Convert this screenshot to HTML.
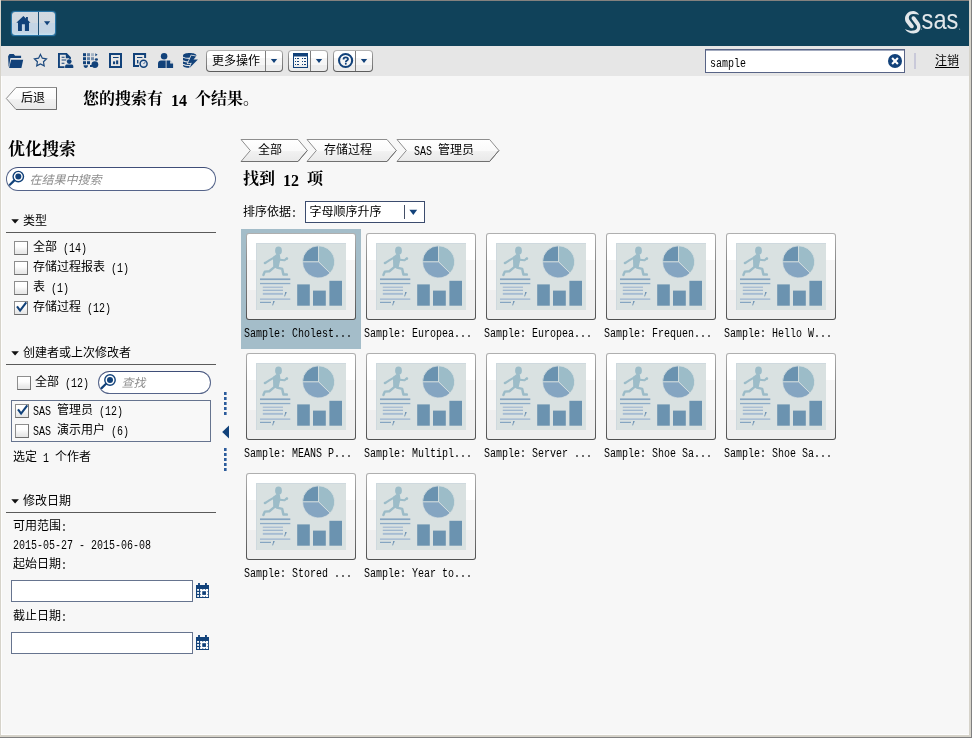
<!DOCTYPE html>
<html lang="zh-CN"><head><meta charset="utf-8"><title>SAS</title>
<style>
html,body{margin:0;padding:0;background:#f7f7f7}
#r{position:relative;will-change:transform;width:972px;height:738px;overflow:hidden;background:#f7f7f7;font-family:"Liberation Sans",sans-serif;font-size:12px;color:#000}
.a{position:absolute;display:block}
svg{display:block;overflow:visible}
.t{position:absolute;white-space:nowrap;color:#000}
.t.i>.c{transform:skewX(-14deg);transform-origin:0 100%}
.c{position:absolute;top:0;height:12px;line-height:12px;font-size:12px;overflow:visible;color:inherit;white-space:pre;font-family:"Liberation Sans","Noto Sans CJK SC",sans-serif}
.l{position:absolute;top:2px;font:12px/12px "Liberation Mono",monospace;white-space:pre;transform:scaleX(.83333);transform-origin:0 0}
.lb{position:absolute;top:2px;font-family:"Liberation Serif",serif;font-weight:bold;white-space:pre}
.t u{position:absolute;left:0;height:1px;background:currentColor}
.btn{border-radius:4px;background:linear-gradient(#b6b6b6 0,#8e8e8e 30%,#7c7c7c 70%,#5a5a5a 100%)}
.btn:before{content:"";position:absolute;left:1px;top:1px;right:1px;bottom:1px;border-radius:3px;background:linear-gradient(#fff 0,#fff 33%,#f6f6f6 33%,#f6f6f6 68%,#ececec 68%,#ececec 100%)}
.cb{box-sizing:border-box;border:1px solid #8e8e8e;border-right-color:#777;border-bottom-color:#6e6e6e;background:linear-gradient(#fff 0,#fdfdfd 40%,#ececec 75%,#e6e6e6 100%)}
.card{border-radius:3px;background:linear-gradient(#b0b0b0 0,#8c8c8c 30%,#6e6e6e 75%,#505050 100%)}
.card:before{content:"";position:absolute;left:1px;top:1px;right:1px;bottom:1px;border-radius:2px;background:linear-gradient(#fff 0,#fff 30.6%,#f6f6f6 30.6%,#f6f6f6 65.9%,#efefef 65.9%,#efefef 100%)}
.card>svg{position:absolute;left:10px;top:10px}
</style></head>
<body>
<div id="r">
<div class="a " style="left:1px;top:1px;width:968px;height:45px;background:#10425a"></div>
<div class="a " style="left:1px;top:46px;width:968px;height:30px;background:#e6e6e6"></div>
<div class="a " style="left:1px;top:0px;width:968px;height:1px;background:#84817e"></div>
<div class="a " style="left:0px;top:0px;width:1px;height:738px;background:#d6d3ca"></div>
<div class="a " style="left:1px;top:76px;width:1px;height:658px;background:#fdfdfd"></div>
<div class="a " style="left:969px;top:0px;width:2px;height:738px;background:#d6d3ca"></div>
<div class="a " style="left:971px;top:0px;width:1px;height:738px;background:#808080"></div>
<div class="a " style="left:1px;top:734px;width:968px;height:1px;background:#fdfdfd"></div>
<div class="a " style="left:0px;top:735px;width:971px;height:2px;background:#d6d3ca"></div>
<div class="a " style="left:0px;top:737px;width:972px;height:1px;background:#808080"></div>
<div class="a " style="left:12px;top:12px;width:43px;height:23px;border-radius:3px;box-shadow:0 0 1.2px .6px #2f7eb3;background:linear-gradient(#d1d9e1 0,#d0d8e0 47%,#c4d4e4 47%,#c4d4e4 88%,#c6e2f2 100%)"></div>
<div class="a " style="left:38px;top:12px;width:1px;height:23px;background:#1d4f74"></div>
<svg class="a" style="left:12px;top:12px" width="43" height="23" viewBox="12 12 43 23" ><path fill="#12427a" d="M16.3 22.8L23.4 16L26 18.5V17.1H27.9V20.3L30.5 22.8H29V30.9H24.9V24.3H21.9V30.9H18V22.8Z"/><path fill="#12427a" d="M44 21.2H50.2L47.1 25.3Z"/></svg>
<svg class="a" style="left:900px;top:6px" width="66" height="34" viewBox="900 6 66 34" ><g fill="#e2e7ea"><path d="M919.2 14.7C917.5 12.3 915.5 11.1 913.2 11.1C908.5 11.1 905 14.6 905 18.7C905 20.4 905.6 21.9 906.7 23.3L910 27.5C910.8 28.5 912.4 28.6 913.2 27.8C914 27 914 25.8 913.3 24.9L909.9 20.5C909.2 19.6 908.8 18.7 908.8 17.7C908.8 15.6 910.7 14 913.2 14C915.5 14 917.5 14.3 919.2 14.7Z"/><path d="M904.9 28.9C907.5 30.3 910.5 30.8 913.2 30.6C915.6 30.4 917.1 29 917.1 27.3C917.1 26.4 916.8 25.6 916.2 24.9L912 19.5C911.3 18.6 911.4 17.4 912.2 16.7C913.1 16 914.4 16.2 915.1 17.1L919.3 22.7C920.1 23.9 920.5 25.4 920.5 27C920.5 30.7 917.5 33.5 913.5 33.5C909.8 33.5 906.8 31.7 904.9 28.9Z"/><circle cx="921.3" cy="29.2" r=".6" opacity=".6"/><circle cx="959.6" cy="29.2" r=".6" opacity=".6"/><text x="921.6" y="28.9" font-family="Liberation Sans, sans-serif" font-size="27.6" textLength="36.8" lengthAdjust="spacingAndGlyphs">sas</text></g></svg>
<svg class="a" style="left:4px;top:50px" width="200" height="22" viewBox="4 50 200 22" ><g fill="#12427a"><path d="M8.1 56.2L9.5 54H13.7L15.1 55.8H21.1V58H10.4L9.1 66.5L8.6 66.5Z"/><path d="M11.1 59.8H23.2L21.4 68H9.1Z"/><path d="M40.45 54.40L42.33 58.16L46.49 58.79L43.49 61.74L44.18 65.89L40.45 63.95L36.72 65.89L37.41 61.74L34.41 58.79L38.57 58.16Z" fill="none" stroke="#1d4a7f" stroke-width="1.2" stroke-linejoin="miter"/><path d="M58 53H66.8L70.9 57.2V59H69.2V58.2H65.8V54.8H59.9V66.2H64.5V68H58Z"/><path d="M61.6 56.8H64.6V57.8H61.6ZM61.6 59.4H66.3V60.4H61.6ZM61.6 62.8H64.4V63.8H61.6Z"/><circle cx="69.2" cy="61.6" r="2.4"/><path d="M65.1 68V66.4C65.1 65.2 66 64.6 67 64.6H71.4C72.5 64.6 73.3 65.2 73.3 66.4V68Z"/><rect x="83" y="53.2" width="3" height="3" opacity="1"/><rect x="87" y="53.2" width="3" height="3" opacity="0.62"/><rect x="91" y="53.2" width="3" height="3" opacity="0.3"/><rect x="83" y="57.2" width="3" height="3" opacity="1"/><rect x="87" y="57.2" width="3" height="3" opacity="0.62"/><rect x="91" y="57.2" width="3" height="3" opacity="0.55"/><rect x="83" y="61.2" width="3" height="3" opacity="1"/><rect x="87" y="61.2" width="3" height="3" opacity="1"/><path d="M95.3 53.2L97.6 54.7L95.3 56.2Z"/><path d="M83.6 65.2H88C88 67 87 68 85.8 68C84.6 68 83.6 67 83.6 65.2Z"/><rect x="90" y="65" width="2" height="2"/><circle cx="94.9" cy="64.6" r="3.4"/><ellipse cx="96.4" cy="59.5" rx="1.6" ry="1.2"/><path fill-rule="evenodd" d="M109 53H122V68H109ZM111 55V66H120V55Z"/><rect x="113" y="57" width="5.6" height="1"/><rect x="113" y="61.4" width="2.1" height="2.8"/><rect x="116.1" y="60.4" width="2.1" height="3.8"/><path d="M133 53H146.1V58H144.1V55H135V65H139V67H133Z"/><rect x="137" y="57" width="5.4" height="1"/><rect x="137" y="60" width="1.4" height="3.4"/><circle cx="143.6" cy="63.7" r="4.6" fill="#e6e6e6"/><circle cx="143.6" cy="63.7" r="3.5" fill="#dfe3ea" stroke="#12427a" stroke-width="1.5"/><path d="M143.6 63.9L145.2 62.2" stroke="#12427a" stroke-width=".9" fill="none"/><circle cx="164.1" cy="56.3" r="3.25"/><path d="M158 68V63.6C158 61.6 159.3 60.5 161 60.5H165.7V68Z"/><path d="M166.5 60.5H170L173.1 63.7V68H166.5Z"/><path d="M170.2 60.7V63.5H173Z" fill="#e6e6e6"/><path d="M183 55.5C183 53.9 186 53 189.7 53C193.4 53 196.4 53.9 196.4 55.5V65.6C196.4 67.1 193.4 68 189.7 68C186 68 183 67.1 183 65.6Z"/><path d="M183 57.1C185.4 58.8 194 58.8 196.4 57.1M183 60.7C185.4 62.4 194 62.4 196.4 60.7M183 64.2C185.4 65.9 194 65.9 196.4 64.2" stroke="#e6e6e6" stroke-width="1.1" fill="none"/><path d="M195.6 57L199.6 56.6V69H189.4L189.8 67.6L197.6 59.9L193.8 59.6Z" fill="#e6e6e6"/><path d="M191.3 55.6L196.1 56.5L193.5 59.4L197.9 59.6L189.8 67.7L191.7 62.8L187.9 63.2Z" stroke="#e6e6e6" stroke-width="1.5" paint-order="stroke"/></g></svg>
<div class="a btn" style="left:206px;top:50px;width:77px;height:22px;"></div>
<div class="a " style="left:265px;top:51px;width:1px;height:20px;background:#7e7e7e"></div>
<svg class="a" style="left:266px;top:55px" width="16" height="12" viewBox="266 55 16 12" ><path fill="#12427a" d="M270.85 59H277.15 L274 62.9Z"/></svg>
<div class="t" style="left:212px;top:55px;width:48px;height:12px"><span class="c" style="left:0px;width:48px">更多操作</span></div>
<div class="a btn" style="left:288px;top:50px;width:40px;height:22px;"></div>
<div class="a " style="left:310px;top:51px;width:1px;height:20px;background:#7e7e7e"></div>
<svg class="a" style="left:311px;top:55px" width="16" height="12" viewBox="311 55 16 12" ><path fill="#12427a" d="M315.85 59H322.15 L319 62.9Z"/></svg>
<svg class="a" style="left:292px;top:52px" width="18" height="18" viewBox="292 52 18 18" ><g fill="#12427a"><path fill-rule="evenodd" d="M293 53H308V68H293ZM294 56.4V67H307V56.4Z"/><rect x="295" y="58" width="1" height="1"/><rect x="297" y="58" width="2" height="1"/><rect x="302" y="58" width="1" height="1"/><rect x="304" y="58" width="2" height="1"/><rect x="295" y="61" width="1" height="1"/><rect x="297" y="61" width="2" height="1"/><rect x="302" y="61" width="1" height="1"/><rect x="304" y="61" width="2" height="1"/><rect x="295" y="64" width="1" height="1"/><rect x="297" y="64" width="2" height="1"/><rect x="302" y="64" width="1" height="1"/><rect x="304" y="64" width="2" height="1"/></g></svg>
<div class="a btn" style="left:333px;top:50px;width:40px;height:22px;"></div>
<div class="a " style="left:355px;top:51px;width:1px;height:20px;background:#7e7e7e"></div>
<svg class="a" style="left:356px;top:55px" width="16" height="12" viewBox="356 55 16 12" ><path fill="#12427a" d="M360.85 59H367.15 L364 62.9Z"/></svg>
<svg class="a" style="left:336px;top:52px" width="18" height="18" viewBox="336 52 18 18" ><circle cx="345.6" cy="60.5" r="6.55" fill="none" stroke="#12427a" stroke-width="2.1"/><path d="M343.5 59.4C343.5 58.1 344.4 57.45 345.7 57.45C347.1 57.45 348 58.2 348 59.2C348 60.6 345.8 60.6 345.8 62.2" fill="none" stroke="#12427a" stroke-width="1.75"/><circle cx="345.8" cy="63.8" r=".95" fill="#12427a"/></svg>
<div class="a " style="left:705px;top:49px;width:200px;height:24px;background:#fff;border:1px solid #586486;box-sizing:border-box;box-shadow:inset 0 1px 0 #a3abbf"></div>
<div class="t" style="left:710px;top:56px;width:36px;height:12px"><span class="l" style="left:0px">sample</span></div>
<svg class="a" style="left:887px;top:53px" width="16" height="16" viewBox="887 53 16 16" ><circle cx="895" cy="61" r="7" fill="#12427a"/><path d="M892.1 58.1L897.9 63.9M897.9 58.1L892.1 63.9" stroke="#fff" stroke-width="2.1" stroke-linecap="butt"/></svg>
<div class="a " style="left:914px;top:53px;width:2px;height:16px;background:#c9c9d9"></div>
<div class="t" style="left:935px;top:55px;width:24px;height:12px"><span class="c" style="left:0px;width:24px">注销</span><u style="width:24px;top:12px"></u></div>
<svg class="a" style="left:4px;top:86px" width="56" height="26" viewBox="4 86 56 26" ><defs><linearGradient id="gb" x1="0" y1="0" x2="0" y2="1"><stop offset="0" stop-color="#fff"/><stop offset=".5" stop-color="#fafafa"/><stop offset=".55" stop-color="#f1f1f1"/><stop offset="1" stop-color="#e9e9e9"/></linearGradient></defs><path d="M6.3 98.5L16 87.5H56.5V109.5H16Z" fill="url(#gb)" stroke="#8c8c8c" stroke-width="1" stroke-linejoin="round"/><path d="M16 109.5H56.5V87.5" fill="none" stroke="#6e6e6e" stroke-width="1"/></svg>
<div class="t" style="left:21px;top:92px;width:24px;height:12px"><span class="c" style="left:0px;width:24px">后退</span></div>
<div class="t" style="left:83px;top:91px;width:176px;height:16px"><span class="c" style="left:0px;width:80px;height:16px;font:bold 16px/16px 'Liberation Serif','Noto Serif CJK SC',serif">您的搜索有</span><span class="c" style="left:80px;width:4px"> </span><span class="lb" style="left:88px;font-size:16px;line-height:16px">14</span><span class="c" style="left:112px;width:64px;height:16px;font:bold 16px/16px 'Liberation Serif','Noto Serif CJK SC',serif">个结果。</span></div>
<div class="t" style="left:8px;top:141px;width:68px;height:17px"><span class="c" style="left:0px;width:68px;height:17px;font:bold 17px/17px 'Liberation Serif','Noto Serif CJK SC',serif">优化搜索</span></div>
<div class="a " style="left:6px;top:167px;width:210px;height:24px;background:#fff;border:1px solid #55648a;border-top-color:#3f4e78;box-sizing:border-box;border-radius:12px"></div>
<svg class="a" style="left:7px;top:168px" width="20" height="22" viewBox="7 168 20 22" ><circle cx="18.3" cy="176.6" r="5.2" fill="#fff" stroke="#12427a" stroke-width="1.4"/><circle cx="18.3" cy="176.6" r="3" fill="#12427a"/><path d="M14.1 180.6L9.9 184.7" stroke="#12427a" stroke-width="2.2" stroke-linecap="round"/></svg>
<div class="t i" style="left:28.5px;top:174px;width:72px;height:12px;color:#8f8f8f"><span class="c" style="left:0px;width:72px">在结果中搜索</span></div>
<svg class="a" style="left:10px;top:215px" width="10" height="12" viewBox="10 215 10 12" ><path d="M11.3 219.3H18.9L15.1 223.6Z" fill="#111"/></svg>
<div class="t" style="left:23px;top:215px;width:24px;height:12px"><span class="c" style="left:0px;width:24px">类型</span></div>
<div class="a " style="left:5.5px;top:232px;width:210.5px;height:1px;background:#5a5a5a"></div>
<div class="a cb" style="left:14px;top:241px;width:14px;height:14px;"></div>
<div class="t" style="left:33px;top:241px;width:54px;height:12px"><span class="c" style="left:0px;width:24px">全部</span><span class="l" style="left:24px"> (14)</span></div>
<div class="a cb" style="left:14px;top:261px;width:14px;height:14px;"></div>
<div class="t" style="left:33px;top:261px;width:96px;height:12px"><span class="c" style="left:0px;width:72px">存储过程报表</span><span class="l" style="left:72px"> (1)</span></div>
<div class="a cb" style="left:14px;top:281px;width:14px;height:14px;"></div>
<div class="t" style="left:33px;top:281px;width:36px;height:12px"><span class="c" style="left:0px;width:12px">表</span><span class="l" style="left:12px"> (1)</span></div>
<div class="a cb" style="left:14px;top:301px;width:14px;height:14px;"></div>
<svg class="a" style="left:14px;top:300px" width="15" height="15" viewBox="14 300 15 15" ><path d="M17 306.4L20.1 310.6L26.3 302.4" fill="none" stroke="#12427a" stroke-width="2.1" stroke-linejoin="miter"/></svg>
<div class="t" style="left:33px;top:301px;width:78px;height:12px"><span class="c" style="left:0px;width:48px">存储过程</span><span class="l" style="left:48px"> (12)</span></div>
<svg class="a" style="left:10px;top:347px" width="10" height="12" viewBox="10 347 10 12" ><path d="M11.3 351.3H18.9L15.1 355.6Z" fill="#111"/></svg>
<div class="t" style="left:23px;top:347px;width:108px;height:12px"><span class="c" style="left:0px;width:108px">创建者或上次修改者</span></div>
<div class="a " style="left:5.5px;top:364px;width:210.5px;height:1px;background:#5a5a5a"></div>
<div class="a cb" style="left:17px;top:375.5px;width:14px;height:14px;"></div>
<div class="t" style="left:35px;top:376px;width:54px;height:12px"><span class="c" style="left:0px;width:24px">全部</span><span class="l" style="left:24px"> (12)</span></div>
<div class="a " style="left:98px;top:371px;width:113px;height:23px;background:#fff;border:1px solid #55648a;border-top-color:#3f4e78;box-sizing:border-box;border-radius:11.5px"></div>
<svg class="a" style="left:99px;top:372px" width="20" height="22" viewBox="99 372 20 22" ><circle cx="110" cy="380" r="5.2" fill="#fff" stroke="#12427a" stroke-width="1.4"/><circle cx="110" cy="380" r="3" fill="#12427a"/><path d="M105.8 384L101.6 388.1" stroke="#12427a" stroke-width="2.2" stroke-linecap="round"/></svg>
<div class="t i" style="left:121px;top:377px;width:24px;height:12px;color:#8f8f8f"><span class="c" style="left:0px;width:24px">查找</span></div>
<div class="a " style="left:11px;top:400px;width:200px;height:42px;border:1px solid #66748f;box-sizing:border-box;background:#f8f8f8"></div>
<div class="a cb" style="left:15px;top:404px;width:14px;height:14px;"></div>
<svg class="a" style="left:15px;top:403px" width="15" height="15" viewBox="15 403 15 15" ><path d="M18 409.4L21.1 413.6L27.3 405.4" fill="none" stroke="#12427a" stroke-width="2.1" stroke-linejoin="miter"/></svg>
<div class="t" style="left:33px;top:404px;width:90px;height:12px"><span class="l" style="left:0px">SAS </span><span class="c" style="left:24px;width:36px">管理员</span><span class="l" style="left:60px"> (12)</span></div>
<div class="a cb" style="left:15px;top:424px;width:14px;height:14px;"></div>
<div class="t" style="left:33px;top:424px;width:96px;height:12px"><span class="l" style="left:0px">SAS </span><span class="c" style="left:24px;width:48px">演示用户</span><span class="l" style="left:72px"> (6)</span></div>
<div class="t" style="left:13px;top:450.5px;width:78px;height:12px"><span class="c" style="left:0px;width:24px">选定</span><span class="l" style="left:24px"> 1 </span><span class="c" style="left:42px;width:36px">个作者</span></div>
<svg class="a" style="left:220px;top:390px" width="12" height="84" viewBox="220 390 12 84" ><rect x="224" y="392" width="2.6" height="3" fill="#2c5c9c"/><rect x="224" y="397" width="2.6" height="3" fill="#2c5c9c"/><rect x="224" y="402" width="2.6" height="3" fill="#2c5c9c"/><rect x="224" y="407" width="2.6" height="3" fill="#2c5c9c"/><rect x="224" y="412" width="2.6" height="3" fill="#2c5c9c"/><rect x="224" y="448" width="2.6" height="3" fill="#2c5c9c"/><rect x="224" y="453" width="2.6" height="3" fill="#2c5c9c"/><rect x="224" y="458" width="2.6" height="3" fill="#2c5c9c"/><rect x="224" y="463" width="2.6" height="3" fill="#2c5c9c"/><rect x="224" y="468" width="2.6" height="3" fill="#2c5c9c"/><path d="M229 425.5V438.5L222.2 432Z" fill="#12427a"/></svg>
<svg class="a" style="left:10px;top:495px" width="10" height="12" viewBox="10 495 10 12" ><path d="M11.3 499.3H18.9L15.1 503.6Z" fill="#111"/></svg>
<div class="t" style="left:23px;top:495px;width:48px;height:12px"><span class="c" style="left:0px;width:48px">修改日期</span></div>
<div class="a " style="left:5.5px;top:512px;width:210.5px;height:1px;background:#5a5a5a"></div>
<div class="t" style="left:13px;top:520px;width:54px;height:12px"><span class="c" style="left:0px;width:48px">可用范围</span><span class="l" style="left:48px">:</span></div>
<div class="t" style="left:13px;top:538px;width:138px;height:12px"><span class="l" style="left:0px">2015-05-27 - 2015-06-08</span></div>
<div class="t" style="left:13px;top:558px;width:54px;height:12px"><span class="c" style="left:0px;width:48px">起始日期</span><span class="l" style="left:48px">:</span></div>
<div class="a " style="left:11px;top:580px;width:182px;height:22px;background:#fff;border:1px solid #66748f;box-sizing:border-box"></div>
<svg class="a" style="left:195px;top:582px" width="16" height="17" viewBox="195 582 16 17" ><g fill="#12427a"><rect x="196" y="585" width="13" height="13"/><rect x="198.1" y="583" width="1.8" height="2.4"/><rect x="205" y="583" width="1.9" height="2.4"/></g><g fill="#fff"><rect x="197.1" y="589" width="1.9" height="1.8"/><rect x="197.1" y="592.05" width="1.9" height="1.8"/><rect x="197.1" y="595.1" width="1.9" height="1.8"/><rect x="200.1" y="589" width="8" height="8"/></g><g fill="#12427a"><rect x="202.25" y="591.2" width="3.7" height="3.7"/><rect x="202.4" y="589" width=".8" height=".8"/><rect x="202.4" y="596.2" width=".8" height=".8"/><rect x="200.1" y="591.3" width=".8" height=".8"/><rect x="207.3" y="591.3" width=".8" height=".8"/><rect x="205.1" y="589" width=".8" height=".8"/><rect x="205.1" y="596.2" width=".8" height=".8"/><rect x="200.1" y="594" width=".8" height=".8"/><rect x="207.3" y="594" width=".8" height=".8"/></g></svg>
<div class="t" style="left:13px;top:610px;width:54px;height:12px"><span class="c" style="left:0px;width:48px">截止日期</span><span class="l" style="left:48px">:</span></div>
<div class="a " style="left:11px;top:632px;width:182px;height:22px;background:#fff;border:1px solid #66748f;box-sizing:border-box"></div>
<svg class="a" style="left:195px;top:634px" width="16" height="17" viewBox="195 634 16 17" ><g fill="#12427a"><rect x="196" y="637" width="13" height="13"/><rect x="198.1" y="635" width="1.8" height="2.4"/><rect x="205" y="635" width="1.9" height="2.4"/></g><g fill="#fff"><rect x="197.1" y="641" width="1.9" height="1.8"/><rect x="197.1" y="644.05" width="1.9" height="1.8"/><rect x="197.1" y="647.1" width="1.9" height="1.8"/><rect x="200.1" y="641" width="8" height="8"/></g><g fill="#12427a"><rect x="202.25" y="643.2" width="3.7" height="3.7"/><rect x="202.4" y="641" width=".8" height=".8"/><rect x="202.4" y="648.2" width=".8" height=".8"/><rect x="200.1" y="643.3" width=".8" height=".8"/><rect x="207.3" y="643.3" width=".8" height=".8"/><rect x="205.1" y="641" width=".8" height=".8"/><rect x="205.1" y="648.2" width=".8" height=".8"/><rect x="200.1" y="646" width=".8" height=".8"/><rect x="207.3" y="646" width=".8" height=".8"/></g></svg>
<svg class="a" width="0" height="0"><defs><linearGradient id="gc" x1="0" y1="0" x2="0" y2="1"><stop offset="0" stop-color="#fff"/><stop offset=".5" stop-color="#fafafa"/><stop offset=".55" stop-color="#f1f1f1"/><stop offset="1" stop-color="#e9e9e9"/></linearGradient></defs></svg>
<svg class="a" style="left:240px;top:138px" width="69" height="25" viewBox="240 138 69 25" ><path d="M241 139.5H298L307.3 150.5L298 161.5H241L250.3 150.5Z" fill="url(#gc)" stroke="#8e8e8e" stroke-width="1" stroke-linejoin="round"/><path d="M241 161.5H298L307.3 150.5" fill="none" stroke="#707070" stroke-width="1"/></svg>
<div class="t" style="left:258px;top:144px;width:24px;height:12px"><span class="c" style="left:0px;width:24px">全部</span></div>
<svg class="a" style="left:306.3px;top:138px" width="92" height="25" viewBox="306.3 138 92 25" ><path d="M307.3 139.5H387.3L396.6 150.5L387.3 161.5H307.3L316.6 150.5Z" fill="url(#gc)" stroke="#8e8e8e" stroke-width="1" stroke-linejoin="round"/><path d="M307.3 161.5H387.3L396.6 150.5" fill="none" stroke="#707070" stroke-width="1"/></svg>
<div class="t" style="left:324px;top:144px;width:48px;height:12px"><span class="c" style="left:0px;width:48px">存储过程</span></div>
<svg class="a" style="left:396.2px;top:138px" width="104.6" height="25" viewBox="396.2 138 104.6 25" ><path d="M397.2 139.5H489.8L499.1 150.5L489.8 161.5H397.2L406.5 150.5Z" fill="url(#gc)" stroke="#8e8e8e" stroke-width="1" stroke-linejoin="round"/><path d="M397.2 161.5H489.8L499.1 150.5" fill="none" stroke="#707070" stroke-width="1"/></svg>
<div class="t" style="left:414px;top:144px;width:60px;height:12px"><span class="l" style="left:0px">SAS </span><span class="c" style="left:24px;width:36px">管理员</span></div>
<div class="t" style="left:243px;top:171px;width:80px;height:16px"><span class="c" style="left:0px;width:32px;height:16px;font:bold 16px/16px 'Liberation Serif','Noto Serif CJK SC',serif">找到</span><span class="c" style="left:32px;width:4px"> </span><span class="lb" style="left:40px;font-size:16px;line-height:16px">12</span><span class="c" style="left:64px;width:16px;height:16px;font:bold 16px/16px 'Liberation Serif','Noto Serif CJK SC',serif">项</span></div>
<div class="t" style="left:243px;top:205.5px;width:54px;height:12px"><span class="c" style="left:0px;width:48px">排序依据</span><span class="l" style="left:48px">:</span></div>
<div class="a " style="left:305px;top:201px;width:120px;height:22px;background:#fff;border:1px solid #3c4c6e;box-sizing:border-box"></div>
<div class="t" style="left:309.5px;top:206px;width:72px;height:12px"><span class="c" style="left:0px;width:72px">字母顺序升序</span></div>
<div class="a " style="left:403.5px;top:205px;width:1px;height:14px;background:#444f66"></div>
<svg class="a" style="left:408px;top:208px" width="12" height="9" viewBox="408 208 12 9" ><path d="M409.4 209.8H417.2L413.3 215.1Z" fill="#12427a"/></svg>
<svg class="a" width="0" height="0"><symbol id="th" viewBox="0 0 90 67" width="90" height="67"><rect width="90" height="67" fill="#d9e1e1"/><rect width="90" height="1" fill="#cfd9de"/><rect width="1" height="67" fill="#cfd9de"/><g fill="#9cbcc8" stroke="#9cbcc8" stroke-linecap="round" stroke-linejoin="round"><ellipse cx="22.5" cy="7.7" rx="3.4" ry="4.1" stroke="none"/><path d="M21.3 11.2L17.5 14.2L17.9 24.2L22 24.4L23.9 15.8L23.2 11.8Z" stroke-width="1.2"/><path d="M18 14.6L13.6 17.2L9.4 19.9" fill="none" stroke-width="2.1"/><circle cx="9" cy="20" r="1.3" stroke="none"/><path d="M23.6 16.8L28.6 17.2L30.6 15.6" fill="none" stroke-width="2"/><circle cx="30.9" cy="15.6" r="1.3" stroke="none"/><path d="M21 24.6L26.2 25.9L27.4 31.4L30.8 31.6" fill="none" stroke-width="2.5"/><path d="M18 24.4L13.4 28.2L8.8 28.6L7.4 32" fill="none" stroke-width="2.4"/></g><rect x="4" y="35.4" width="30.3" height="1.7" fill="#85a5c1"/><rect x="4" y="39.9" width="30.3" height="1.3" fill="#8dabc6"/><rect x="6.8" y="43.6" width="20.2" height="1.3" fill="#a6bcd3"/><rect x="6.8" y="46.7" width="20.2" height="1.2" fill="#9ab3cd"/><rect x="6.8" y="49.9" width="20.2" height="1.9" fill="#a6bcd3"/><path d="M29.3 49.2L30.4 49.4L29 53.4L28.2 53.2Z" fill="#7396b6"/><circle cx="29.9" cy="49.7" r=".75" fill="#668cae"/><rect x="4" y="55.4" width="30.3" height="1.5" fill="#a6bcd3"/><rect x="4" y="58.8" width="11" height="1.2" fill="#85a5c1"/><path d="M17.3 58.2L18.3 58.4L17 62.4L16.2 62.2Z" fill="#7396b6"/><circle cx="17.9" cy="58.7" r=".75" fill="#668cae"/><rect x="41.2" y="41.4" width="12.6" height="21.3" fill="#6b93b0"/><rect x="57" y="47.6" width="12.8" height="15.1" fill="#6b93b0"/><rect x="73.4" y="37.8" width="12.6" height="24.9" fill="#6b93b0"/><path d="M62.6 18.9L46.50 18.90A16.1 16.1 0 0 1 62.60 2.80Z" fill="#6b93b0" stroke="#d9e1e1" stroke-width=".8"/><path d="M62.6 18.9L62.60 2.80A16.1 16.1 0 0 1 74.18 30.08Z" fill="#9cbcc8" stroke="#d9e1e1" stroke-width=".8"/><path d="M62.6 18.9L74.18 30.08A16.1 16.1 0 0 1 46.50 18.90Z" fill="#85a5c1" stroke="#d9e1e1" stroke-width=".8"/></symbol></svg>
<div class="a " style="left:241px;top:229px;width:120px;height:120px;background:#a4bdc9"></div>
<div class="a card" style="left:246px;top:233px;width:110px;height:87px;"><svg width="90" height="67"><use href="#th"/></svg></div>
<div class="t" style="left:244px;top:326px;width:108px;height:12px"><span class="l" style="left:0px">Sample: Cholest...</span></div>
<div class="a card" style="left:366px;top:233px;width:110px;height:87px;"><svg width="90" height="67"><use href="#th"/></svg></div>
<div class="t" style="left:364px;top:326px;width:108px;height:12px"><span class="l" style="left:0px">Sample: Europea...</span></div>
<div class="a card" style="left:486px;top:233px;width:110px;height:87px;"><svg width="90" height="67"><use href="#th"/></svg></div>
<div class="t" style="left:484px;top:326px;width:108px;height:12px"><span class="l" style="left:0px">Sample: Europea...</span></div>
<div class="a card" style="left:606px;top:233px;width:110px;height:87px;"><svg width="90" height="67"><use href="#th"/></svg></div>
<div class="t" style="left:604px;top:326px;width:108px;height:12px"><span class="l" style="left:0px">Sample: Frequen...</span></div>
<div class="a card" style="left:726px;top:233px;width:110px;height:87px;"><svg width="90" height="67"><use href="#th"/></svg></div>
<div class="t" style="left:724px;top:326px;width:108px;height:12px"><span class="l" style="left:0px">Sample: Hello W...</span></div>
<div class="a card" style="left:246px;top:353px;width:110px;height:87px;"><svg width="90" height="67"><use href="#th"/></svg></div>
<div class="t" style="left:244px;top:446px;width:108px;height:12px"><span class="l" style="left:0px">Sample: MEANS P...</span></div>
<div class="a card" style="left:366px;top:353px;width:110px;height:87px;"><svg width="90" height="67"><use href="#th"/></svg></div>
<div class="t" style="left:364px;top:446px;width:108px;height:12px"><span class="l" style="left:0px">Sample: Multipl...</span></div>
<div class="a card" style="left:486px;top:353px;width:110px;height:87px;"><svg width="90" height="67"><use href="#th"/></svg></div>
<div class="t" style="left:484px;top:446px;width:108px;height:12px"><span class="l" style="left:0px">Sample: Server ...</span></div>
<div class="a card" style="left:606px;top:353px;width:110px;height:87px;"><svg width="90" height="67"><use href="#th"/></svg></div>
<div class="t" style="left:604px;top:446px;width:108px;height:12px"><span class="l" style="left:0px">Sample: Shoe Sa...</span></div>
<div class="a card" style="left:726px;top:353px;width:110px;height:87px;"><svg width="90" height="67"><use href="#th"/></svg></div>
<div class="t" style="left:724px;top:446px;width:108px;height:12px"><span class="l" style="left:0px">Sample: Shoe Sa...</span></div>
<div class="a card" style="left:246px;top:473px;width:110px;height:87px;"><svg width="90" height="67"><use href="#th"/></svg></div>
<div class="t" style="left:244px;top:566px;width:108px;height:12px"><span class="l" style="left:0px">Sample: Stored ...</span></div>
<div class="a card" style="left:366px;top:473px;width:110px;height:87px;"><svg width="90" height="67"><use href="#th"/></svg></div>
<div class="t" style="left:364px;top:566px;width:108px;height:12px"><span class="l" style="left:0px">Sample: Year to...</span></div>
</div>
</body></html>
